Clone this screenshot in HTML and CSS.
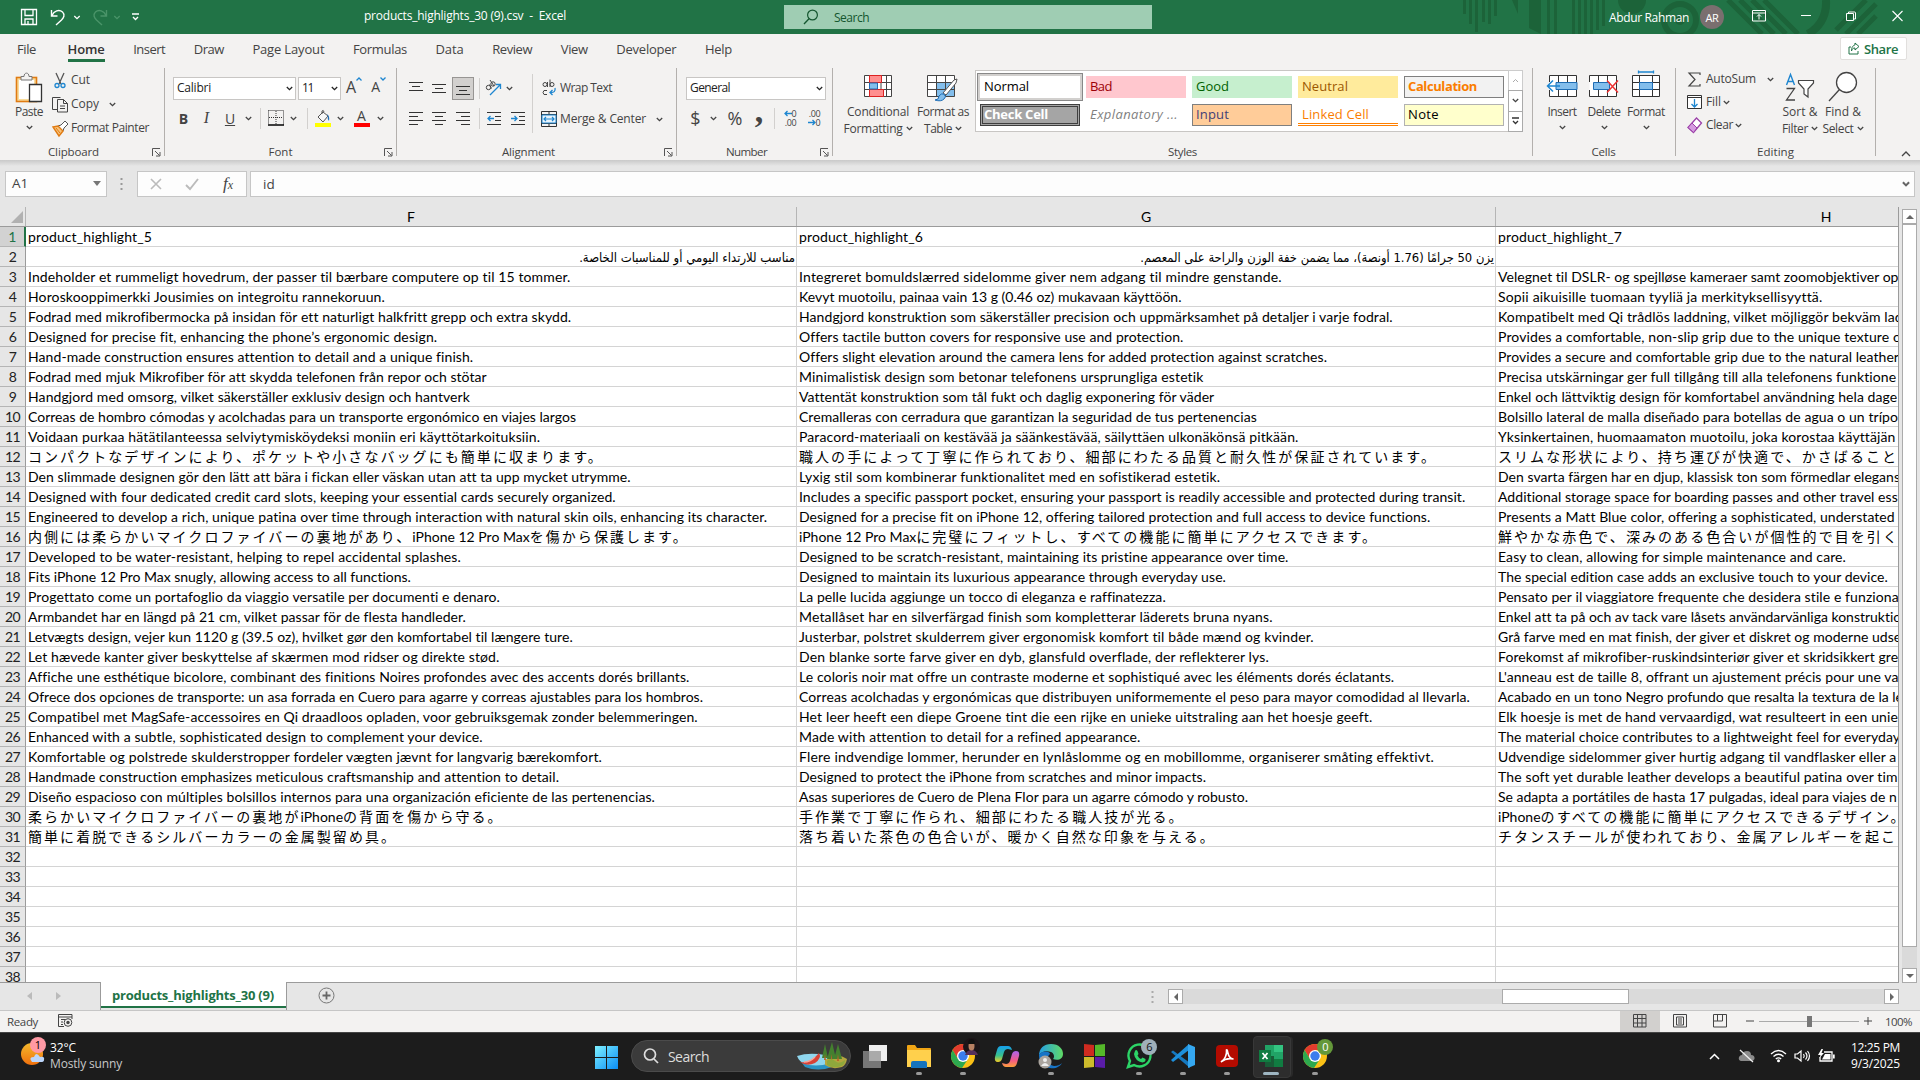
FILE: index.html
```html
<!DOCTYPE html>
<html lang="en">
<head>
<meta charset="utf-8">
<title>products_highlights_30 (9).csv - Excel</title>
<link rel="stylesheet" href="styles.css">
</head>
<body>
<svg class="defs" width="0" height="0">
  <symbol id="chev" viewBox="0 0 7 5"><path d="M.8 1 3.5 3.7 6.200 1" fill="none" stroke="currentColor" stroke-width="1.3"/></symbol>
  <symbol id="launch" viewBox="0 0 9 9"><path d="M.5 8V.5H8M3 3l4.500 4.500M8 4v4H4" fill="none" stroke="#555" /></symbol>
  <symbol id="chrome" viewBox="0 0 26 26"><circle cx="13" cy="13" r="12" fill="#fbc116"/><path d="M2.600 7A12 12 0 0 1 23.400 7H13L8 16z" fill="#e33b2e"/><path d="M2.600 7A12 12 0 0 0 12 25l6-9-10 0z" fill="#2da94f"/><circle cx="13" cy="13" r="6" fill="#fff"/><circle cx="13" cy="13" r="4.700" fill="#3b7ded"/></symbol>
</svg>

<header class="titlebar">
  <svg class="pattern" width="420" height="34" viewBox="0 0 420 34"><g fill="#1c6339"><path d="M3 0h3v14H3zM9 0h3v24H9zM15 0h3v32h-3zM22 0h3v22h-3zM28 0h3v24h-3zM34 0h3v16h-3zM52 0h6v14zM69 0h12v34l-12-6zM87 0h3v34h-3zM94 0h3v34h-3zM112 0h3v34h-3zM118 0h3v34h-3zM124 0h3v34h-3zM130 0h3v34h-3zM136 0h3v30h-3zM142 0h3v26h-3zM158 0h28a14 14 0 0 1-28 0z"/></g><circle cx="220" cy="20" r="16" fill="none" stroke="#1c6339" stroke-width="6"/><circle cx="220" cy="20" r="5" fill="#1c6339"/><g stroke="#1c6339" stroke-width="5" fill="none"><path d="m268 0 34 34M280 0l34 34M292 0l34 34M304 0l34 34"/><path d="M366 0c1 18-8 28-18 34" stroke-width="8"/><path d="m376 30 30-30M386 34l30-30M398 34l18-18"/></g></svg>
  <div class="quick">
    <svg width="18" height="18" viewBox="0 0 18 18"><path d="M1.500 1.500h15v15h-15zM5 1.500v6h8v-6M5 16v-5h8v5M8 16v-3" fill="none" stroke="#fff" stroke-width="1.300"/></svg>
    <svg class="undo" width="16" height="18" viewBox="0 0 16 18"><path d="M1.500 2v6h6M2 7.500C4 3 9 1 12.500 4c3 3 1 6-1 8L6 17" fill="none" stroke="#fff" stroke-width="1.400"/></svg>
    <svg class="c1" width="8" height="5"><use href="#chev"/></svg>
    <svg class="redo" width="16" height="18" viewBox="0 0 16 18"><path d="M14.500 2v6h-6M14 7.500C12 3 7 1 3.500 4c-3 3-1 6 1 8L10 17" fill="none" stroke="#4a9469" stroke-width="1.400"/></svg>
    <svg class="c2" width="8" height="5"><use href="#chev"/></svg>
    <svg class="c3" width="9" height="8" viewBox="0 0 9 8"><path d="M1 1h7M2 4l2.500 2.500L7 4" fill="none" stroke="#fff" stroke-width="1.300"/></svg>
  </div>
  <div class="doc"><span data-w="202">products_highlights_30 (9).csv&nbsp; -&nbsp; Excel</span></div>
  <div class="tsearch"><svg width="16" height="16" viewBox="0 0 16 16"><circle cx="9.500" cy="6" r="4.900" fill="none" stroke="#14562f" stroke-width="1.200"/><path d="M6 9.700 1 15" stroke="#14562f" stroke-width="1.300"/></svg><span data-w="35">Search</span></div>
  <div class="user"><span data-w="80">Abdur Rahman</span></div>
  <div class="avatar"><span data-w="13">AR</span></div>
  <div class="winbtns">
    <svg width="14" height="12" viewBox="0 0 14 12"><path d="M.5.500h13v10.500H.5zM.5 3h13M7 9.500v-5M5 6.500l2-2 2 2" fill="none" stroke="#fff"/></svg>
    <svg width="11" height="12" viewBox="0 0 11 12"><path d="M0 5.500h10" stroke="#fff"/></svg>
    <svg width="11" height="12" viewBox="0 0 11 12"><path d="M.5 3.500h7v7h-7zM2.500 3.500v-1.500h6q1 0 1 1v6h-2" fill="none" stroke="#fff"/></svg>
    <svg width="11" height="12" viewBox="0 0 11 12"><path d="m.5 1 10 10M10.500 1l-10 10" stroke="#fff" stroke-width="1.100"/></svg>
  </div>
</header>

<nav class="tabs">
  <span class="tab file"><span data-w="19">File</span></span><span class="tab home"><span data-w="37">Home</span></span><span class="tab"><span data-w="32">Insert</span></span><span class="tab"><span data-w="30">Draw</span></span><span class="tab"><span data-w="72">Page Layout</span></span><span class="tab"><span data-w="54">Formulas</span></span><span class="tab"><span data-w="28">Data</span></span><span class="tab"><span data-w="40">Review</span></span><span class="tab"><span data-w="27">View</span></span><span class="tab"><span data-w="60">Developer</span></span><span class="tab"><span data-w="27">Help</span></span>
  <button class="share"><svg width="12" height="13" viewBox="0 0 12 13"><path d="M3 5H1v7h9V9M7 1l4 3.500L7 8V6C5 6 4 7 3.500 9 3.500 5 5 3.500 7 3z" fill="none" stroke="#217346"/></svg><span data-w="34">Share</span></button>
</nav>

<section class="ribbon">
  <div class="group clip">
    <div class="body">
      <div class="big"><svg width="28" height="31" viewBox="0 0 28 31"><rect x="1.500" y="5.500" width="20" height="24" fill="#f9dc9c" stroke="#e07b12" stroke-width="1.600"/><path d="M4 8h15v19H4z" fill="#fff"/><path d="M6 8V4.500h3C9 0 14 0 14 4.500h3V8z" fill="#f3f2f1" stroke="#777"/><path d="M14.500 12.500h12v17h-12z" fill="#fff" stroke="#333" stroke-width="1.300"/></svg><span class="l1" data-w="28">Paste</span><svg class="ch" width="7" height="5"><use href="#chev"/></svg></div>
      <div class="list">
        <div><svg width="17" height="17" viewBox="0 0 17 17"><path d="m4 1 5 11M12 1 7 12" stroke="#555" stroke-width="1.300"/><circle cx="5" cy="13.500" r="2" fill="none" stroke="#1e86d0" stroke-width="1.300"/><circle cx="11" cy="13.500" r="2" fill="none" stroke="#1e86d0" stroke-width="1.300"/></svg><span data-w="19">Cut</span></div>
        <div><svg width="17" height="17" viewBox="0 0 17 17"><path d="M5.500 13.500h-5v-12h8M5.500 3.500h6l4 4v8.500h-10zM11.500 3.500v4h4M8 10h5M8 12.500h5" fill="none" stroke="#444"/></svg><span data-w="28">Copy</span><svg class="far" width="7" height="5"><use href="#chev"/></svg></div>
        <div><svg width="17" height="17" viewBox="0 0 17 17"><path d="m9 5 4-4 3 3-4 4-1 3-5-5z" fill="#fff" stroke="#555"/><path d="m1 7 5-1 5 5-4 5z" fill="#f8c27a" stroke="#e07b12" stroke-width="1.400"/><path d="m4 8 4 5" stroke="#e07b12"/></svg><span data-w="78">Format Painter</span></div>
      </div>
    </div>
    <div class="label"><span data-w="51">Clipboard</span></div><svg class="la" width="9" height="9"><use href="#launch"/></svg>
  </div>
  <div class="group font">
    <div class="stack">
      <div class="r1"><div class="select s1"><span data-w="34">Calibri</span><svg width="7" height="5"><use href="#chev"/></svg></div><div class="select s2"><span data-w="11">11</span><svg width="7" height="5"><use href="#chev"/></svg></div><span class="grow">A<svg width="6" height="4" viewBox="0 0 6 4"><path d="M.5 3.500 3 1l2.500 2.500" fill="none" stroke="#1e86d0" stroke-width="1.300"/></svg></span><span class="shrink">A<svg width="6" height="4" viewBox="0 0 6 4"><path d="M.5.500 3 3 5.500.500" fill="none" stroke="#1e86d0" stroke-width="1.300"/></svg></span></div>
      <div class="r2">
        <b>B</b><i>I</i><u>U</u><svg width="7" height="5"><use href="#chev"/></svg><span class="vs"></span>
        <svg width="16" height="16" viewBox="0 0 16 16"><path d="M.5.500h15v14M.5.500v14M8 1v14M1 7.500h14" fill="none" stroke="#333" stroke-dasharray="1 1"/><path d="M0 15h16" stroke="#000" stroke-width="1.500"/></svg><svg width="7" height="5"><use href="#chev"/></svg><span class="vs"></span>
        <svg width="16" height="17" viewBox="0 0 16 17"><path d="m3 7 5-5 5 4-5 6zM7 4V1q1.500-1.500 2 1" fill="#f8f8f8" stroke="#555"/><path d="M12 4q3 2 2 7-2-2-1-4z" fill="#1e6db5"/><path d="M0 13h16v4H0z" fill="#ff0"/></svg><svg width="7" height="5"><use href="#chev"/></svg>
        <span class="fc">A</span><svg width="7" height="5"><use href="#chev"/></svg>
      </div>
    </div>
    <div class="label"><span data-w="24">Font</span></div><svg class="la" width="9" height="9"><use href="#launch"/></svg>
  </div>
  <div class="group align">
    <div class="body">
      <div class="stack">
        <div class="r1 ar1">
          <svg width="14" height="14"><path d="M0 1.500h14M3 5.500h8M0 9.500h14" stroke="#333"/></svg>
          <svg width="14" height="14"><path d="M0 3.500h14M3 7.500h8M0 11.500h14" stroke="#333"/></svg>
          <span class="on"><svg width="14" height="14"><path d="M0 5.500h14M3 9.500h8M0 13.500h14" stroke="#333"/></svg></span>
          <span class="vs"></span>
          <svg width="17" height="16" viewBox="0 0 17 16"><g fill="none" stroke="#444"><circle cx="3.500" cy="7.500" r="2.200"/><circle cx="8" cy="4" r="2.200"/><path d="M4.500 4.500l2 4M5 0l4 6"/></g><path d="m5 15 10-10M11 4.500h4.500V9" fill="none" stroke="#1e86d0" stroke-width="1.300"/></svg>
          <svg width="7" height="5"><use href="#chev"/></svg>
        </div>
        <div class="r2 ar2">
          <svg width="14" height="14"><path d="M0 1.500h14M0 5.500h9M0 9.500h14M0 13.500h9" stroke="#333"/></svg>
          <svg width="14" height="14"><path d="M0 1.500h14M3 5.500h8M0 9.500h14M3 13.500h8" stroke="#333"/></svg>
          <svg width="14" height="14"><path d="M0 1.500h14M5 5.500h9M0 9.500h14M5 13.500h9" stroke="#333"/></svg>
          <span class="vs"></span>
          <svg width="14" height="14"><path d="M0 1.500h14M8 5.500h6M8 9.500h6M0 13.500h14" stroke="#333"/><path d="M7 7.500H1M3.500 5 1 7.500 3.500 10" fill="none" stroke="#1e86d0" stroke-width="1.300"/></svg>
          <svg width="14" height="14"><path d="M0 1.500h14M8 5.500h6M8 9.500h6M0 13.500h14" stroke="#333"/><path d="M0 7.500h6M3.500 5 6 7.500 3.500 10" fill="none" stroke="#1e86d0" stroke-width="1.300"/></svg>
        </div>
      </div>
      <div class="wrapcol">
        <div><svg width="16" height="18" viewBox="0 0 16 18"><g fill="none" stroke="#444"><circle cx="4" cy="5.500" r="2"/><path d="M6.500 3v5M9 .500V8M6 11.500q-4-1-4 2t4 2"/><circle cx="11" cy="5.500" r="2"/></g><path d="M14 9q1 5-5 4.500M11.500 11 9 13.500l2.500 2.500" fill="none" stroke="#1e86d0" stroke-width="1.300"/></svg><span data-w="52">Wrap Text</span></div>
        <div><svg width="16" height="16" viewBox="0 0 16 16"><path d="M.5.500h15v15H.5zM.5 3.500h15M.5 12.500h15M8 .500v3M8 12.500v3" fill="none" stroke="#333"/><path d="M1 4h14v8H1z" fill="#e9f4fc" stroke="#1e86d0"/><path d="M3 8h10M5 6 3 8l2 2M11 6l2 2-2 2" fill="none" stroke="#1e86d0" stroke-width="1.200"/></svg><span data-w="86">Merge &amp; Center</span><svg class="mch" width="7" height="5"><use href="#chev"/></svg></div>
      </div>
    </div>
    <div class="label"><span data-w="53">Alignment</span></div><svg class="la" width="9" height="9"><use href="#launch"/></svg>
  </div>
  <div class="group number">
    <div class="stack">
      <div class="r1"><div class="select s3"><span data-w="40">General</span><svg width="7" height="5"><use href="#chev"/></svg></div></div>
      <div class="r2 nr2"><span class="sym">$</span><svg width="7" height="5"><use href="#chev"/></svg><span class="sym">%</span><span class="comma">,</span><span class="vs"></span>
        <span class="dec"><span><svg width="8" height="7" viewBox="0 0 8 7"><path d="M8 3.500H1M3.500 1 1 3.500 3.500 6" fill="none" stroke="#1e86d0" stroke-width="1.300"/></svg>0</span><span>.00</span></span><span class="dec"><span>.00</span><span><svg width="8" height="7" viewBox="0 0 8 7"><path d="M0 3.500h7M4.500 1 7 3.500 4.500 6" fill="none" stroke="#1e86d0" stroke-width="1.300"/></svg>0</span></span></div>
    </div>
    <div class="label"><span data-w="41">Number</span></div><svg class="la" width="9" height="9"><use href="#launch"/></svg>
  </div>
  <div class="group styles">
    <div class="body">
      <div class="big b1"><svg width="28" height="31" viewBox="0 0 28 31"><path d="M.5 3.500h27v21H.5z" fill="#fff"/><path d="M.5 3.500h27v21H.5zM.5 10.500h27M.5 17.500h27M5.500 3.500v21M22.500 3.500v21M17 3.500v21" fill="none" stroke="#444"/><path d="M5.500 3.500h12v7h-12zM5.500 17.500h14v7h-14z" fill="#ff8f8f" stroke="#d22"/><path d="M5.500 11h8v6h-8z" fill="#83beec" stroke="#1e6db5"/></svg><span class="l1" data-w="62">Conditional</span><span class="l2"><span data-w="59">Formatting</span><svg width="7" height="5"><use href="#chev"/></svg></span></div>
      <div class="big b2"><svg width="32" height="31" viewBox="0 0 32 31"><path d="M.5 3.500h27v21H.5z" fill="#fff"/><path d="M10 10.500h17.500v14H10z" fill="#83beec"/><path d="M.5 3.500h27v21H.5zM.5 10.500h27M.5 17.500h27M9.500 3.500v21M18.500 3.500v21" fill="none" stroke="#444"/><path d="m16 21 11-13 3-1-1 4-10 12z" fill="#fff" stroke="#555"/><path d="M8 28q4 0 4-4 2-3 5-2 3 3 0 5-3 3-9 1z" fill="#83beec" stroke="#1e6db5"/></svg><span class="l1" data-w="52">Format as</span><span class="l2"><span data-w="28">Table</span><svg width="7" height="5"><use href="#chev"/></svg></span></div>
      <div class="gallery">
        <div class="chips">
          <span class="chip normal"><span data-w="45">Normal</span></span><span class="chip bad"><span data-w="22">Bad</span></span><span class="chip good"><span data-w="33">Good</span></span><span class="chip neutral"><span data-w="46">Neutral</span></span><span class="chip calc"><span data-w="69">Calculation</span></span>
          <span class="chip check"><span data-w="64">Check Cell</span></span><span class="chip expl"><span data-w="88">Explanatory ...</span></span><span class="chip input"><span data-w="33">Input</span></span><span class="chip linked"><span data-w="67">Linked Cell</span></span><span class="chip note"><span data-w="31">Note</span></span>
        </div>
        <div class="gscroll"><span class="dis"><svg width="7" height="5" viewBox="0 0 7 5"><path d="M1 4 3.500 1.500 6 4" fill="none" stroke="#aaa"/></svg></span><span><svg width="7" height="5"><use href="#chev"/></svg></span><span><svg width="9" height="8" viewBox="0 0 9 8"><path d="M1 1h7M2 4l2.500 2.500L7 4" fill="none" stroke="#333" stroke-width="1.300"/></svg></span></div>
      </div>
    </div>
    <div class="label"><span data-w="29">Styles</span></div>
  </div>
  <div class="group cells">
    <div class="body">
      <div class="big"><svg width="32" height="31" viewBox="0 0 32 31"><path d="M3.500 3.500h27v21h-27z" fill="#fff"/><path d="M3.500 10V3.500h27v21h-27V18M12.500 3.500v21M21.500 3.500v21" fill="none" stroke="#333"/><path d="M10 10.500h21v7H10z" fill="#83beec" stroke="#1e6db5"/><path d="M14 14H1.500M7 8.500 1.500 14 7 19.500" fill="none" stroke="#1e86d0" stroke-width="1.500"/></svg><span class="l1" data-w="29">Insert</span><svg class="ch" width="7" height="5"><use href="#chev"/></svg></div>
      <div class="big"><svg width="32" height="31" viewBox="0 0 32 31"><path d="M1.500 3.500h27v21h-27z" fill="#fff"/><path d="M1.500 10V3.500h27v21h-27V18M10.500 3.500v21M19.500 3.500v21" fill="none" stroke="#333"/><path d="M5.500 10.500h16v7h-16z" fill="#83beec" stroke="#1e6db5"/><path d="m19 8.500 11 12M30 8.500l-11 12" stroke="#e33" stroke-width="1.500"/></svg><span class="l1" data-w="33">Delete</span><svg class="ch" width="7" height="5"><use href="#chev"/></svg></div>
      <div class="big"><svg width="32" height="31" viewBox="0 0 32 31"><path d="M2.500 3.500h27v21h-27z" fill="#fff"/><path d="M2.500 3.500h27v21h-27zM2.500 10.500h27M2.500 17.500h27M9.500 3.500v21M22.500 3.500v21" fill="none" stroke="#333"/><path d="M9.500 10.500h13v7h-13z" fill="#83beec" stroke="#1e6db5"/><path d="M8.500-1.500v3M8.500 0h15M23.500-1.500v3" stroke="#1e86d0" stroke-width="1.300"/></svg><span class="l1" data-w="38">Format</span><svg class="ch" width="7" height="5"><use href="#chev"/></svg></div>
    </div>
    <div class="label"><span data-w="24">Cells</span></div>
  </div>
  <div class="group editing">
    <div class="body">
      <div class="list">
        <div><svg width="15" height="17" viewBox="0 0 15 17"><path d="M13 4V2H2l6 6.500L2 15h11v-2" fill="none" stroke="#444" stroke-width="1.200"/></svg><span data-w="50">AutoSum</span><svg class="far" width="7" height="5"><use href="#chev"/></svg></div>
        <div><svg width="15" height="17" viewBox="0 0 15 17"><path d="M.5 1.500h14v13H.5z" fill="#fff" stroke="#333"/><path d="M.5 3.500h14" stroke="#333"/><path d="M7.500 5v8M4.500 10l3 3 3-3" fill="none" stroke="#1e86d0" stroke-width="1.300"/></svg><span data-w="15">Fill</span><svg class="near" width="7" height="5"><use href="#chev"/></svg></div>
        <div><svg width="15" height="17" viewBox="0 0 15 17"><path d="m9.500 1 5 5-8 9.500-5.500-5z" fill="#fff" stroke="#9b3fa8" stroke-width="1.300"/><path d="m5 6 5 5-3.500 4.500-5.500-5z" fill="#d59be0" stroke="#9b3fa8"/></svg><span data-w="27">Clear</span><svg class="near" width="7" height="5"><use href="#chev"/></svg></div>
      </div>
      <div class="big b3"><svg width="30" height="31" viewBox="0 0 30 31"><path d="m1.500 13 4-10.500L9.500 13M3 9.500h5.500" fill="none" stroke="#1e86d0" stroke-width="1.400"/><path d="M1.500 16.500h8L1.500 28h8.500" fill="none" stroke="#444" stroke-width="1.300"/><path d="M13.500 8.500h15v2.500l-5.500 6v8l-4-3v-5l-5.500-6z" fill="#fff" stroke="#444" stroke-width="1.200"/></svg><span class="l1" data-w="35">Sort &amp;</span><span class="l2"><span data-w="26">Filter</span><svg width="7" height="5"><use href="#chev"/></svg></span></div>
      <div class="big b4"><svg width="30" height="31" viewBox="0 0 30 31"><circle cx="18.500" cy="10.500" r="10" fill="#fff" stroke="#444" stroke-width="1.300"/><path d="M11.500 17.500 1 29" stroke="#444" stroke-width="1.300"/></svg><span class="l1" data-w="36">Find &amp;</span><span class="l2"><span data-w="31">Select</span><svg width="7" height="5"><use href="#chev"/></svg></span></div>
    </div>
    <div class="label"><span data-w="37">Editing</span></div>
  </div>
  <div class="collapse"><svg width="10" height="6" viewBox="0 0 10 6"><path d="m1 5 4-4 4 4" fill="none" stroke="#444" stroke-width="1.300"/></svg></div>
</section>

<section class="formula">
  <div class="namebox"><span data-w="16">A1</span><svg width="8" height="5"><path d="M0 0h8L4 5z" fill="#777"/></svg></div>
  <svg class="dots" width="3" height="12"><path d="M.5 0h2v2h-2zM.5 5h2v2h-2zM.5 10h2v2h-2z" fill="#999"/></svg>
  <div class="fx"><svg width="12" height="12"><path d="m1 1 10 10M11 1 1 11" stroke="#bbb" stroke-width="1.600"/></svg><svg width="14" height="12"><path d="m1 7 4 4 8-10" fill="none" stroke="#bbb" stroke-width="1.900"/></svg><span>f<small>x</small></span></div>
  <div class="finput"><span data-w="12">id</span><svg width="8" height="6" viewBox="0 0 7 5"><path d="M.8 1 3.500 3.700 6.200 1" fill="none" stroke="#666" stroke-width="1.800"/></svg></div>
</section>

<main class="work">
  <div class="sheet">
    <div class="cols"><span class="corner"><svg width="12" height="12"><path d="M12 0v12H0z" fill="#b1b1b1"/></svg></span><span>F</span><span>G</span><span class="hh">H</span></div>
    <div class="rows" id="rows"></div>
  </div>
  <div class="vscroll"><span class="btn"><svg width="8" height="4"><path d="M0 4h8L4 0z" fill="#666"/></svg></span><span class="thumb"></span><span class="track"></span><span class="btn"><svg width="8" height="4"><path d="M0 0h8L4 4z" fill="#666"/></svg></span></div>
</main>

<section class="sheetbar">
  <div class="nav"><svg width="5" height="8"><path d="M5 0v8L0 4z" fill="#bbb"/></svg><svg width="5" height="8"><path d="M0 0v8l5-4z" fill="#bbb"/></svg></div>
  <div class="stab"><span data-w="162">products_highlights_30 (9)</span></div>
  <div class="sbfill"><svg class="plus" width="17" height="17" viewBox="0 0 17 17"><circle cx="8.500" cy="8.500" r="7.500" fill="none" stroke="#777"/><path d="M4.500 8.500h8M8.500 4.500v8" stroke="#666" stroke-width="1.800"/></svg>
  <svg class="dots" width="3" height="12"><path d="M.5 0h2v2h-2zM.5 5h2v2h-2zM.5 10h2v2h-2z" fill="#aaa"/></svg>
  <div class="hscroll"><span class="btn"><svg width="4" height="8"><path d="M4 0v8L0 4z" fill="#666"/></svg></span><span class="hthumb"></span><span class="btn last"><svg width="4" height="8"><path d="M0 0v8l4-4z" fill="#666"/></svg></span></div></div>
</section>

<section class="status">
  <span class="ready"><span data-w="31">Ready</span></span>
  <svg class="mac" width="15" height="13" viewBox="0 0 15 13"><path d="M6 12.500H.5V.500h13.500V5M.5 3h13.500M3 5.500h4M3 8h2M3 10.500h2" fill="none" stroke="#444"/><circle cx="10" cy="8.500" r="3.800" fill="#f3f2f1" stroke="#444"/><circle cx="10" cy="8.500" r="1.700" fill="#444"/></svg>
  <div class="views">
    <span class="on"><svg width="14" height="14" viewBox="0 0 14 14"><path d="M.5.500h12.500v12.500H.5zM4.500.500v12.500M9 .500v12.500M.5 4.500H13M.5 9H13" fill="none" stroke="#444"/></svg></span>
    <span><svg width="14" height="14" viewBox="0 0 14 14"><path d="M.5.500h13v12.500H.5zM3.500 3h7v8h-7zM5 5h4M5 7h4M5 9h4" fill="none" stroke="#444"/></svg></span>
    <span><svg width="14" height="14" viewBox="0 0 14 14"><path d="M.5.500h13v12.500H.5zM4.500.500v6.500M9.500.500v6.500M.5 7h9" fill="none" stroke="#444"/></svg></span>
  </div>
  <svg class="zoombar" width="126" height="12"><path d="M0 6h8M118 6h8M122 2v8" stroke="#444"/><path d="M13 6.500h100" stroke="#aaa"/><path d="M61 1h5v11h-5z" fill="#777"/></svg>
  <span class="pct"><span data-w="27">100%</span></span>
</section>

<footer class="taskbar">
  <div class="weather"><div class="wicon"><svg width="24" height="30" viewBox="0 0 24 30"><defs><linearGradient id="sun" x2="0" y2="1"><stop stop-color="#f4b92c"/><stop offset="1" stop-color="#f0700d"/></linearGradient></defs><circle cx="11" cy="16" r="11" fill="url(#sun)"/><path d="M11 24q-4-5 2-5 2-6 6 0 5-1 4 3 0 2-3 2z" fill="#bcd6fb"/></svg><span class="wbadge">1</span></div>
    <div class="wt"><span data-w="26">32°C</span><span class="dim" data-w="72">Mostly sunny</span></div></div>
  <div class="apps">
    <svg class="win" width="23" height="23" viewBox="0 0 23 23"><defs><linearGradient id="w" x2="1" y2="1"><stop stop-color="#7df0ff"/><stop offset="1" stop-color="#0a8df7"/></linearGradient></defs><path d="M0 0h11v11H0zM12 0h11v11H12zM0 12h11v11H0zM12 12h11v11H12z" fill="url(#w)"/></svg>
    <div class="pill"><svg width="16" height="16" viewBox="0 0 16 16"><circle cx="7" cy="6.500" r="5.500" fill="none" stroke="#ddd" stroke-width="1.700"/><path d="m11 11 4 4" stroke="#ddd" stroke-width="1.700"/></svg><span data-w="41">Search</span><svg class="scene" width="50" height="28" viewBox="0 0 50 28"><path d="M0 14q12-4 28-1l8 9-12 3Q4 25 0 14z" fill="#8fd6ee"/><path d="M5 21q14 5 28 0l2 4q-14 5-27 0z" fill="#2a93c4"/><path d="M28 18q12-8 22-1-1 6-5 8-10 3-17-2z" fill="#b4a63e"/><path d="m25 16 3-14 3 14zM30 17l5-17 4 17zM37 17l4-15 4 15z" fill="#44802f"/><path d="m28 12 1 6h-2zM34.500 12l1 8h-2zM41 12l1 7h-2z" fill="#b8622b"/><path d="M30 19q4-4 8 0t10-1q0 5-4 6-8 3-14-1z" fill="#8fa83c"/><path d="M3 20q10 2 19-9 3 5-4 10-8 4-15-1z" fill="#d84236"/><path d="M7 20q6 0 11-5" stroke="#f5a59b" stroke-width="1.500" fill="none"/></svg></div>
    <span class="app"><svg width="26" height="26" viewBox="0 0 26 26"><path d="M1 8h18v17H1z" fill="#777"/><path d="M7 2h18v16H7z" fill="#eee"/><path d="M7 8h12v10H7z" fill="#aaa"/></svg></span>
    <span class="app run"><svg width="26" height="26" viewBox="0 0 26 26"><path d="M1 3q0-1 1-1h7l2 3h13q1 0 1 1v17H1z" fill="#f0a514"/><path d="M1 7h24v17H1z" fill="#ffd04c"/><path d="M5 25v-5q0-2 2-2h12q2 0 2 2v5z" fill="#1573bd"/></svg></span>
    <span class="app run"><svg width="26" height="26"><use href="#chrome"/></svg><svg class="face" width="17" height="17" viewBox="0 0 17 17"><circle cx="8.500" cy="8.500" r="8.500" fill="#1c1418"/><path d="M2 17q2-5 6.500-5t6.500 5z" fill="#55305a"/><ellipse cx="8.500" cy="8" rx="3" ry="4.500" fill="#b77f62"/><path d="M5 6q0-5 3.500-5T12 6z" fill="#111"/></svg></span>
    <span class="app"><svg width="26" height="26" viewBox="0 0 26 26"><defs><linearGradient id="ca" y2="1" x2="0"><stop stop-color="#159fee"/><stop offset=".6" stop-color="#39c28c"/><stop offset="1" stop-color="#f3cd26"/></linearGradient><linearGradient id="cb" y2="1" x2="0"><stop stop-color="#ac64ed"/><stop offset=".6" stop-color="#f45b84"/><stop offset="1" stop-color="#fba03a"/></linearGradient></defs><path d="M7 3h7q3 0 4 4l-4-1q-3 0-4 3l-2 7q-1 3-4 3-4 0-3-5l2-7q1-4 4-4z" fill="url(#ca)"/><path d="M19 24h-7q-3 0-4-4l4 1q3 0 4-3l2-7q1-3 4-3 4 0 3 5l-2 7q-1 4-4 4z" fill="url(#cb)"/></svg></span>
    <span class="app run"><svg width="26" height="26" viewBox="0 0 26 26"><defs><linearGradient id="e1" x2="1"><stop stop-color="#249de5"/><stop offset="1" stop-color="#60db65"/></linearGradient></defs><path d="M1 13C1 5 6 1 13 1c8 0 12 5 12 10 0 5-5 7-10 5 2-2 1-6-2-7C8 7 2 9 1 13z" fill="url(#e1)"/><path d="M1 12c3-5 11-4 11-1-4 3-3 11 4 12 4 0 7-2 8-3-2 4-7 6-12 5C5 24 1 19 1 12z" fill="#1774c7"/><circle cx="7" cy="19" r="6.500" fill="#aaa49e"/><circle cx="7" cy="17" r="2" fill="#eee"/><path d="M3 23q4-6 8 0z" fill="#eee"/></svg></span>
    <span class="app"><svg width="26" height="26" viewBox="0 0 26 26"><path d="m2 1 10 1v11H2z" fill="#cf2b20"/><path d="m13 2 10-1v12H13z" fill="#55b82a"/><path d="M2 14h10v10l-10 1z" fill="#cdbb2c"/><path d="M13 14h10v11l-10-1z" fill="#5a1ca8"/></svg></span>
    <span class="app run"><svg width="26" height="26" viewBox="0 0 26 26"><path d="m2 24 2-6a11 11 0 1 1 4 4z" fill="none" stroke="#2cd467" stroke-width="2.400"/><path d="M9 8q1-2 2.500 0l1 3-1 1.500q1 2.500 3.500 3.500l1.500-1.500 3 1.500q.5 3-3 3.500Q9 18 8 11z" fill="#2cd467"/></svg><span class="badge g">6</span></span>
    <span class="app run"><svg width="26" height="26" viewBox="0 0 26 26"><path d="m1 9 2-1.500L20 20v5z" fill="#1578bf"/><path d="m1 17 18-16v6L3 19z" fill="#1d90dc"/><path d="m18 1 7 3v18l-7 3z" fill="#35a8f1"/></svg></span>
    <span class="app run"><svg width="26" height="26" viewBox="0 0 26 26"><rect x="2" y="2" width="22" height="22" rx="4" fill="#b30b00"/><path d="M7 19c4-2 6-8 5.500-12 2-1 0 9 7 9-5-1-9 0-12.500 3z" fill="none" stroke="#fff" stroke-width="1.600"/></svg></span>
    <span class="app run xl"><svg width="26" height="26" viewBox="0 0 26 26"><path d="M7 2h18v22H7z" fill="#185c37"/><path d="M7 2h9v11H7z" fill="#21a366"/><path d="M16 2h9v7h-9z" fill="#33c481"/><path d="M16 9h9v7h-9z" fill="#21a366"/><path d="M16 16h9v8h-9z" fill="#107c41"/><path d="M1 7h12v12H1z" fill="#107c41"/><path d="m4.500 10 5 6M9.500 10l-5 6" stroke="#fff" stroke-width="1.700"/></svg></span>
    <span class="app run"><svg width="26" height="26"><use href="#chrome"/></svg><span class="badge gr">0</span></span>
  </div>
  <div class="tray">
    <svg width="11" height="7"><path d="m1 6 4.500-4.500L10 6" fill="none" stroke="#fff" stroke-width="1.500"/></svg>
    <svg width="17" height="14" viewBox="0 0 17 14"><path d="M3 12q-3-1-2-4 1-2 3-2 1-4 5-4t4 4q4 0 3.500 4-1 2-3 2z" fill="#8a8a8a"/><path d="m2 1 13 12" stroke="#eee" stroke-width="1.300"/></svg>
    <svg width="17" height="14" viewBox="0 0 17 14"><g fill="none" stroke="#fff" stroke-width="1.400"><path d="M1 5q7.500-7 15 0M3.500 7.500q5-4.500 10 0M5.800 10q2.700-2.200 5.400 0"/></g><circle cx="8.500" cy="11.800" r="1.500" fill="#fff"/></svg>
    <svg width="17" height="14" viewBox="0 0 17 14"><path d="M1 5v4h2.500L7 12V2L3.500 5z" fill="none" stroke="#fff" stroke-width="1.200"/><path d="M9.500 5q1.500 2 0 4M11.500 3.500q3 3.500 0 7M13.500 2q4 5 0 10" fill="none" stroke="#fff" stroke-width="1.200"/></svg>
    <svg width="17" height="14" viewBox="0 0 17 14"><path d="M6 3h8v9H2V8" fill="none" stroke="#fff" stroke-width="1.300"/><path d="M7 5h5.500v5.500H4z" fill="#fff"/><path d="M15 5.500h1.700v4H15zM3.500 0 0 6h2.500L1.500 9 6 4H3.500L5 0z" fill="#fff"/></svg>
    <div class="clock"><span data-w="49">12:25 PM</span><span data-w="49">9/3/2025</span></div>
  </div>
</footer>
<script src="app.js"></script>
</body>
</html>
```
FILE: app.js
```js
// Each record holds the F, G and H cells; a number after a text is its set width in pixels.
const data = [
["product_highlight_5",124,"product_highlight_6",124,"product_highlight_7",124],
["مناسب للارتداء اليومي أو للمناسبات الخاصة.",216,"يزن 50 جرامًا (1.76 أونصة)، مما يضمن خفة الوزن والراحة على المعصم.",354,"",0],
["Indeholder et rummeligt hovedrum, der passer til bærbare computere op til 15 tommer.",543,"Integreret bomuldslærred sidelomme giver nem adgang til mindre genstande.",483,"Velegnet til DSLR- og spejlløse kameraer samt zoomobjektiver op",401],
["Horoskooppimerkki Jousimies on integroitu rannekoruun.",357,"Kevyt muotoilu, painaa vain 13 g (0.46 oz) mukavaan käyttöön.",382,"Sopii aikuisille tuomaan tyyliä ja merkityksellisyyttä.",324],
["Fodrad med mikrofibermocka på insidan för ett naturligt halkfritt grepp och extra skydd.",542,"Handgjord konstruktion som säkerställer precision och uppmärksamhet på detaljer i varje fodral.",594,"Kompatibelt med Qi trådlös laddning, vilket möjliggör bekväm lad",405],
["Designed for precise fit, enhancing the phone’s ergonomic design.",409,"Offers tactile button covers for responsive use and protection.",384,"Provides a comfortable, non-slip grip due to the unique texture o",403],
["Hand-made construction ensures attention to detail and a unique finish.",445,"Offers slight elevation around the camera lens for added protection against scratches.",528,"Provides a secure and comfortable grip due to the natural leather",401],
["Fodrad med mjuk Mikrofiber för att skydda telefonen från repor och stötar",458,"Minimalistisk design som betonar telefonens ursprungliga estetik",405,"Precisa utskärningar ger full tillgång till alla telefonens funktione",399],
["Handgjord med omsorg, vilket säkerställer exklusiv design och hantverk",442,"Vattentät konstruktion som tål fukt och daglig exponering för väder",415,"Enkel och lättviktig design för komfortabel användning hela dage",399],
["Correas de hombro cómodas y acolchadas para un transporte ergonómico en viajes largos",548,"Cremalleras con cerradura que garantizan la seguridad de tus pertenencias",458,"Bolsillo lateral de malla diseñado para botellas de agua o un trípo",400],
["Voidaan purkaa hätätilanteessa selviytymisköydeksi moniin eri käyttötarkoituksiin.",512,"Paracord-materiaali on kestävää ja säänkestävää, säilyttäen ulkonäkönsä pitkään.",499,"Yksinkertainen, huomaamaton muotoilu, joka korostaa käyttäjän",397],
["コンパクトなデザインにより、ポケットや小さなバッグにも簡単に収まります。",0,"職人の手によって丁寧に作られており、細部にわたる品質と耐久性が保証されています。",0,"スリムな形状により、持ち運びが快適で、かさばること",0],
["Den slimmade designen gör den lätt att bära i fickan eller väskan utan att ta upp mycket utrymme.",601,"Lyxig stil som kombinerar funktionalitet med en sofistikerad estetik.",422,"Den svarta färgen har en djup, klassisk ton som förmedlar elegans",402],
["Designed with four dedicated credit card slots, keeping your essential cards securely organized.",588,"Includes a specific passport pocket, ensuring your passport is readily accessible and protected during transit.",666,"Additional storage space for boarding passes and other travel ess",400],
["Engineered to develop a rich, unique patina over time through interaction with natural skin oils, enhancing its character.",740,"Designed for a precise fit on iPhone 12, offering tailored protection and full access to device functions.",631,"Presents a Matt Blue color, offering a sophisticated, understated",396],
["内側には柔らかいマイクロファイバーの裏地があり、iPhone 12 Pro Maxを傷から保護します。",0,"iPhone 12 Pro Maxに完璧にフィットし、すべての機能に簡単にアクセスできます。",0,"鮮やかな赤色で、深みのある色合いが個性的で目を引く",0],
["Developed to be water-resistant, helping to repel accidental splashes.",433,"Designed to be scratch-resistant, maintaining its pristine appearance over time.",490,"Easy to clean, allowing for simple maintenance and care.",348],
["Fits iPhone 12 Pro Max snugly, allowing access to all functions.",383,"Designed to maintain its luxurious appearance through everyday use.",427,"The special edition case adds an exclusive touch to your device.",390],
["Progettato come un portafoglio da viaggio versatile per documenti e denaro.",472,"La pelle lucida aggiunge un tocco di eleganza e raffinatezza.",366,"Pensato per il viaggiatore frequente che desidera stile e funziona",401],
["Armbandet har en längd på 21 cm, vilket passar för de flesta handleder.",438,"Metallåset har en silverfärgad finish som kompletterar läderets bruna nyans.",473,"Enkel att ta på och av tack vare låsets användarvänliga konstruktio",403],
["Letvægts design, vejer kun 1120 g (39.5 oz), hvilket gør den komfortabel til længere ture.",545,"Justerbar, polstret skulderrem giver ergonomisk komfort til både mænd og kvinder.",515,"Grå farve med en mat finish, der giver et diskret og moderne udse",403],
["Let hævede kanter giver beskyttelse af skærmen mod ridser og direkte stød.",471,"Den blanke sorte farve giver en dyb, glansfuld overflade, der reflekterer lys.",470,"Forekomst af mikrofiber-ruskindsinteriør giver et skridsikkert gre",400],
["Affiche une esthétique bicolore, combinant des finitions Noires profondes avec des accents dorés brillants.",661,"Le coloris noir mat offre un contraste moderne et sophistiqué avec les éléments dorés éclatants.",595,"L'anneau est de taille 8, offrant un ajustement précis pour une va",400],
["Ofrece dos opciones de transporte: un asa forrada en Cuero para agarre y correas ajustables para los hombros.",675,"Correas acolchadas y ergonómicas que distribuyen uniformemente el peso para mayor comodidad al llevarla.",671,"Acabado en un tono Negro profundo que resalta la textura de la le",405],
["Compatibel met MagSafe-accessoires en Qi draadloos opladen, voor gebruiksgemak zonder belemmeringen.",670,"Het leer heeft een diepe Groene tint die een rijke en unieke uitstraling aan het hoesje geeft.",573,"Elk hoesje is met de hand vervaardigd, wat resulteert in een unie",400],
["Enhanced with a subtle, sophisticated design to complement your device.",455,"Made with attention to detail for a refined appearance.",341,"The material choice contributes to a lightweight feel for everyday",402],
["Komfortable og polstrede skulderstropper fordeler vægten jævnt for langvarig bærekomfort.",574,"Flere indvendige lommer, herunder en lynlåslomme og en mobillomme, organiserer småting effektivt.",635,"Udvendige sidelommer giver hurtig adgang til vandflasker eller a",399],
["Handmade construction emphasizes meticulous craftsmanship and attention to detail.",531,"Designed to protect the iPhone from scratches and minor impacts.",407,"The soft yet durable leather develops a beautiful patina over tim",400],
["Diseño espacioso con múltiples bolsillos internos para una organización eficiente de las pertenencias.",627,"Asas superiores de Cuero de Plena Flor para un agarre cómodo y robusto.",449,"Se adapta a portátiles de hasta 17 pulgadas, ideal para viajes de n",399],
["柔らかいマイクロファイバーの裏地がiPhoneの背面を傷から守る。",0,"手作業で丁寧に作られ、細部にわたる職人技が光る。",0,"iPhoneのすべての機能に簡単にアクセスできるデザイン。",0],
["簡単に着脱できるシルバーカラーの金属製留め具。",0,"落ち着いた茶色の色合いが、暖かく自然な印象を与える。",0,"チタンスチールが使われており、金属アレルギーを起こ",0]
];

const rows = document.getElementById("rows");
for (let i = 0; i < 38; i++) {
  const row = document.createElement("div");
  row.className = i ? "row" : "row first";
  const head = document.createElement("span");
  head.className = "rh";
  head.textContent = i + 1;
  row.append(head);
  for (let c = 0; c < 3; c++) {
    const cell = document.createElement("span");
    cell.className = "cell";
    const text = data[i] ? data[i][c * 2] : "";
    const width = data[i] ? data[i][c * 2 + 1] : 0;
    if (text) {
      const inner = document.createElement("span");
      if (/[\u0600-\u06ff]/.test(text)) { cell.className += " rtl"; inner.dir = "rtl"; inner.lang = "ar"; }
      for (const run of text.match(/[\u3000-\u9fff]+|[^\u3000-\u9fff]+/g)) {
        if (/[\u3000-\u9fff]/.test(run)) {
          const jp = document.createElement("span");
          jp.className = "jp";
          jp.lang = "ja";
          jp.textContent = run;
          inner.append(jp);
        } else inner.append(run);
      }
      if (width) inner.dataset.w = width;
      cell.append(inner);
    }
    row.append(cell);
  }
  rows.append(row);
}

// Space each label out to its set width; joined scripts are sized instead of spaced.
for (const el of document.querySelectorAll("[data-w]")) {
  const want = +el.dataset.w;
  const now = el.getBoundingClientRect().width;
  if (el.dir === "rtl") {
    el.style.fontSize = parseFloat(getComputedStyle(el).fontSize) * want / now + "px";
  } else {
    el.style.letterSpacing = (want - now) / el.textContent.length + "px";
  }
}
```
FILE: styles.css
```css
*{box-sizing:border-box}
body{margin:0;width:1920px;height:1080px;overflow:hidden;background:#e6e6e6;font:12px "Open Sans","Noto Sans",sans-serif;color:#444;display:flex;flex-direction:column}
svg{display:block;flex:none;overflow:visible}
.defs{position:absolute}
[data-w]{display:inline-block;white-space:nowrap;flex:none}
.titlebar{height:34px;flex:none;background:#217346;color:#fff;display:flex;align-items:center;position:relative}
.pattern{position:absolute;left:1460px;top:0;overflow:hidden}
.quick{display:flex;align-items:center;padding-left:20px;width:364px;height:36px}
.undo{margin-left:12px}.c1{margin-left:7px}.redo{margin-left:11px}.c2{margin-left:5px;color:#4a9469}.c3{margin-left:10px}
.doc{width:420px;line-height:32px;height:34px}
.tsearch{width:368px;height:24px;background:#9fcdb3;color:#14562f;display:flex;align-items:center;padding-left:19px;gap:15px}
.user{margin-left:457px;width:91px;position:relative}
.avatar{width:24px;height:24px;border-radius:50%;background:#7a6f6f;font-size:11px;display:flex;align-items:center;justify-content:center;position:relative}
.winbtns{display:flex;justify-content:space-between;width:151px;margin-left:28px;position:relative;align-items:center;padding-bottom:3px}
.tabs{height:34px;flex:none;background:#f3f2f1;display:flex;padding-left:17px;gap:28.600px;position:relative;font-size:13px}
.tab{height:28px;line-height:31px}
.tab.file{width:22px}
.tab.home{border-bottom:3px solid #217346;font-weight:600;width:37px;color:#333}
.share{margin:3px 13px 0 auto;width:67px;height:23px;border:1px solid #e1dfdd;border-radius:2px;background:#fff;color:#217346;font:600 13px "Open Sans",sans-serif;display:flex;align-items:center;gap:4px;padding:0 0 0 7px}
.ribbon{height:92px;flex:none;background:#f3f2f1;display:flex}
.group{height:88px;border-right:1px solid #b3b0ad;position:relative;flex:none}
.body{display:flex;height:76px}
.stack,.body{height:76px}
.label{height:16px;line-height:16px;text-align:center;font-size:11.500px}
.la{position:absolute;right:3px;bottom:-1px}
.clip{width:165px}.font{width:232px}.align{width:280px}.number{width:156px}.styles{width:700px}.cells{width:143px}.editing{width:200px}
.big{display:flex;flex-direction:column;align-items:center;padding-top:4px}
.big>svg:first-child{height:31px}
.big .l1{line-height:16px;margin-top:1px;margin-bottom:1px}
.ch{margin-top:4px}
.l2{display:flex;align-items:center;gap:3px;height:14px}
.list [data-w],.wrapcol [data-w],.select [data-w]{padding-bottom:2px}
.clip .big{margin-left:14px;width:30px}
.list>div{display:flex;align-items:center;height:24px;gap:2px}
.clip .list{margin-left:8px}
.clip .far{margin-left:8px}
.clip .label{padding-right:17px}
.r1{display:flex;align-items:center;height:24px;padding-left:8px;padding-top:0;margin-top:0}
.stack{padding-top:8px}
.select{height:23px;background:#fff;border:1px solid #c8c6c4;display:flex;align-items:center;justify-content:space-between;padding:0 2px 0 3px;color:#222}
.s1{width:123px}.s2{width:43px;margin-left:2px}.s3{width:140px}
.number .r1{padding-left:9px}
.grow,.shrink{display:flex;font-size:16px;line-height:20px;margin-left:5px;padding-bottom:2px}
.shrink{font-size:14px;margin-left:9px}
.r2{display:grid;grid-template-columns:23px 23px 24px 13px 11px 20px 15px 12px 20px 15px 27px 10px;height:28px;padding-left:7px;align-items:center;justify-items:center;margin-top:4px}
.r2 b,.r2 i,.r2 u{font-size:14px}
.r2 i{font-family:"Liberation Serif",serif;font-size:16px}
.vs{width:1px;height:21px;background:#d2d0ce}
.fc{width:16px;height:17px;border-bottom:4px solid #f00;font-size:14px;line-height:12px;text-align:center}
.ar1{display:grid;grid-template-columns:23px 24px 24px 8px 21px 10px;justify-items:center;padding-left:7px}
.ar2{grid-template-columns:23px 24px 24px 8px 22px 26px}
.on{background:#d2d0ce}
.ar1 .on{width:22px;height:23px;border:1px solid #979593;display:flex;align-items:center;justify-content:center}
.wrapcol{border-left:1px solid #d2d0ce;height:59px;margin-top:6px;margin-left:1px;padding-left:8px}
.wrapcol>div{display:flex;align-items:center;gap:3px;height:28px}
.wrapcol>div+div{height:34px}
.mch{margin-left:7px}
.align .label{padding-right:16px}
.nr2{grid-template-columns:23px 12px 32px 16px 14px 18px 30px}
.sym{font-size:18px;line-height:20px}
.comma{font:bold 34px/10px "Liberation Serif",serif;height:24px}
.dec{font-size:9px;line-height:9px;display:flex;flex-direction:column;align-items:flex-end;letter-spacing:-.3px}
.dec>span{display:flex;align-items:center;height:9px}
.number .label{padding-left:0;padding-right:16px}
.b1{width:66px;margin-left:12px}.b2{width:60px;margin-left:2px;margin-right:0}
.gallery{width:548px;height:62px;margin:2px 0 0 2px;border:1px solid #c8c6c4;background:#fff;display:flex;justify-content:space-between}
.chips{display:grid;grid-template-columns:repeat(5,100px);grid-template-rows:22px 22px;gap:6px;padding:5px 0 0 4px}
.chip{font-size:13px;line-height:21px;padding-left:4px;height:22px}
.normal{color:#000;outline:1px solid #888;outline-offset:2px;box-shadow:0 0 0 2px #d2d0ce}
.bad{background:#ffc7ce;color:#9c0006}.good{background:#c6efce;color:#006100}.neutral{background:#ffeb9c;color:#9c5700}
.calc{background:#f2f2f2;color:#fa7d00;border:1px solid #7f7f7f;font-weight:bold;line-height:19px;padding-left:3px}
.check{background:#a5a5a5;color:#fff;border:3px double #3f3f3f;font-weight:bold;line-height:15px;padding-left:1px}
.expl{color:#7f7f7f;font-style:italic}
.input{background:#ffcc99;color:#3f3f76;border:1px solid #7f7f7f;line-height:19px;padding-left:3px}
.linked{color:#fa7d00;border-bottom:3px double #ff8001}
.note{background:#ffffcc;color:#000;border:1px solid #b2b2b2;line-height:19px;padding-left:3px}
.gscroll{width:15px;margin:-1px;display:flex;flex-direction:column}
.gscroll span{flex:1;border:1px solid #aaa;display:flex;align-items:center;justify-content:center;margin-top:-1px}
.gscroll span:first-child{margin-top:0;border-color:#ccc}
.cells .body{padding-left:8px}
.cells .big{width:42px}
.cells .label{padding-right:1px}
.editing .list{margin:0 0 0 11px;width:89px}
.editing .list>div{height:23px;gap:4px}
.editing .far{margin-left:7px}.editing .near{margin-left:-2px}
.b3{width:42px;margin-left:3px}.b4{width:44px}
.editing .label{padding-left:0}
.collapse{padding:83px 0 0 25px}
.formula{height:47px;flex:none;background:linear-gradient(#c9c9c9,#e6e6e6 6px);display:flex;padding:11px 5px 0;font-size:13.500px}
.formula>div{height:26px;background:#fdfdfd;border:1px solid #c6c6c6;display:flex;align-items:center}
.formula .namebox{width:102px;justify-content:space-between;padding:0 5px 2px 6px}
.dots{margin:7px 14px 0 13px}
.formula .fx{width:110px;justify-content:space-between;padding:0 13px 1px 12px}
.fx span{font:italic 17px "Liberation Serif",serif}.fx small{font-size:12px}
.formula .finput{flex:1;margin-left:3px;justify-content:space-between;padding:0 4px 0 12px}
.work{height:776px;flex:none;display:flex;position:relative}
.sheet{width:1899px;height:776px;border-right:1px solid #9b9b9b;border-bottom:1px solid #9b9b9b;overflow:hidden;flex:none;color:#000}
.cols{display:grid;grid-template-columns:26px 771px 699px 660px;height:20px;border-bottom:1px solid #9b9b9b;background:#e6e6e6;text-align:center;font:14px/20px Lato,sans-serif}
.cols span{border-right:1px solid #b5b5b5;height:19px}
.cols .hh{border:0}
.corner{display:flex;justify-content:flex-end;align-items:flex-end;padding:0 2px 3px 0}
.row{display:grid;grid-template-columns:26px 771px 699px 420px;height:20px}
.rh{background:#e6e6e6;border-right:1px solid #9b9b9b;border-bottom:1px solid #b5b5b5;font:14px/20px Lato,sans-serif;text-align:center;letter-spacing:-.7px;color:#222;height:20px}
.first .rh{background:#d2d2d2;color:#217346;border-right:2px solid #217346}
.cell{border-right:1px solid #d4d4d4;border-bottom:1px solid #d4d4d4;background:#fff;padding-left:2px;font:14px/19px Lato,"Noto Sans",sans-serif;height:20px;white-space:nowrap;overflow:hidden}
.rtl{text-align:right;padding-right:1px}
.rtl span{font-family:"DejaVu Sans Condensed","DejaVu Sans",sans-serif;font-stretch:condensed;font-size:13px;line-height:16px}
.jp{font:14px/17px "Noto Sans CJK JP",sans-serif;letter-spacing:2.060px}
.vscroll{width:15px;margin-left:3px;display:flex;flex-direction:column;padding-top:2px}
.btn{width:15px;height:15px;border:1px solid #ababab;background:#fff;display:flex;align-items:center;justify-content:center;flex:none}
.thumb{height:723px;border:1px solid #ababab;background:#fff}
.track{flex:1;background:#dadada}
.sheetbar{height:27px;flex:none;display:flex}
.nav{width:101px;border-right:1px solid #9b9b9b;display:flex;gap:24px;padding:9px 0 0 27px;margin-top:-1px;border-top:1px solid #9b9b9b}
.stab{width:185px;margin-top:-1px;height:26px;background:#fff;border-bottom:2px solid #217346;color:#217346;font:bold 13px/26px "Open Sans",sans-serif;padding-left:11px;position:relative}
.sbfill{flex:1;border-left:1px solid #9b9b9b;display:flex;padding-left:31px;position:relative}
.plus{margin-top:4px}
.sbfill .dots{margin:8px 14px 0 816px}
.hscroll{width:731px;height:15px;margin-top:6px;background:#dadada;display:flex}
.hthumb{width:127px;margin-left:319px;border:1px solid #ababab;background:#fff}
.last{margin-left:auto}
.status{height:22px;flex:none;background:#f3f2f1;border-top:1px solid #c6c6c6;display:flex;align-items:center;font-size:11.500px}
.ready{padding-left:7px;width:58px}
.mac{margin-top:-2px}
.views{display:flex;margin-left:1547px;height:21px}
.views span{width:40px;display:flex;align-items:center;justify-content:center;padding-bottom:2px}
.zoombar{margin-left:6px;margin-top:-2px}.pct{margin-left:13px;padding-bottom:1px}
.taskbar{height:48px;flex:none;background:#1c1c1c;border-top:1px solid #444;display:flex;color:#fff}
.weather{display:flex;width:595px;padding-left:21px;gap:5px}
.wicon{position:relative;width:24px;padding-top:5px}
.wbadge{position:absolute;left:9px;top:4px;width:16px;height:16px;border-radius:50%;background:#ff99a4;color:#000;font-size:11px;line-height:16px;text-align:center}
.wt{display:flex;flex-direction:column;line-height:16px;padding-top:7px;align-items:flex-start}
.dim{color:#c8c8c8}
.apps{display:flex;align-items:center;width:1100px;height:46px}
.pill{width:220px;height:32px;background:#3b3b3b;border:1px solid #4b4b4b;border-radius:16px;margin:0 2px 0 13px;display:flex;align-items:center;padding-left:11px;gap:9px;font-size:14px;color:#ddd}
.win{margin-top:2px}
.scene{margin-left:auto;margin-right:3px}
.app{width:44.050px;height:46px;display:flex;align-items:center;justify-content:center;position:relative;flex:none}
.run::after{content:"";position:absolute;bottom:4px;width:6px;height:3px;border-radius:2px;background:#999}
.xl{isolation:isolate}
.xl::before{content:"";position:absolute;z-index:-1;left:4px;top:3px;width:36px;height:40px;border-radius:4px;background:#2d2d2d;border:1px solid #383838;box-shadow:3px 0 0 -1px #292929}
.xl::after{width:16px;background:#9fb6c2}
.badge{position:absolute;left:24px;top:6px;width:16px;height:16px;border-radius:50%;text-align:center;font-size:11px;line-height:16px;color:#111}
.g{background:#9fb0ba}.gr{background:#64983a;color:#fff}
.face{position:absolute;left:22px;top:5px}
.tray{display:flex;align-items:center;height:46px;padding-left:14px}
.tray svg:nth-child(2){margin-left:18px}.tray svg:nth-child(3){margin-left:15px}.tray svg:nth-child(4),.tray svg:nth-child(5){margin-left:7px}
.clock{margin-left:16px;display:flex;flex-direction:column;line-height:16px;align-items:flex-end}
```
